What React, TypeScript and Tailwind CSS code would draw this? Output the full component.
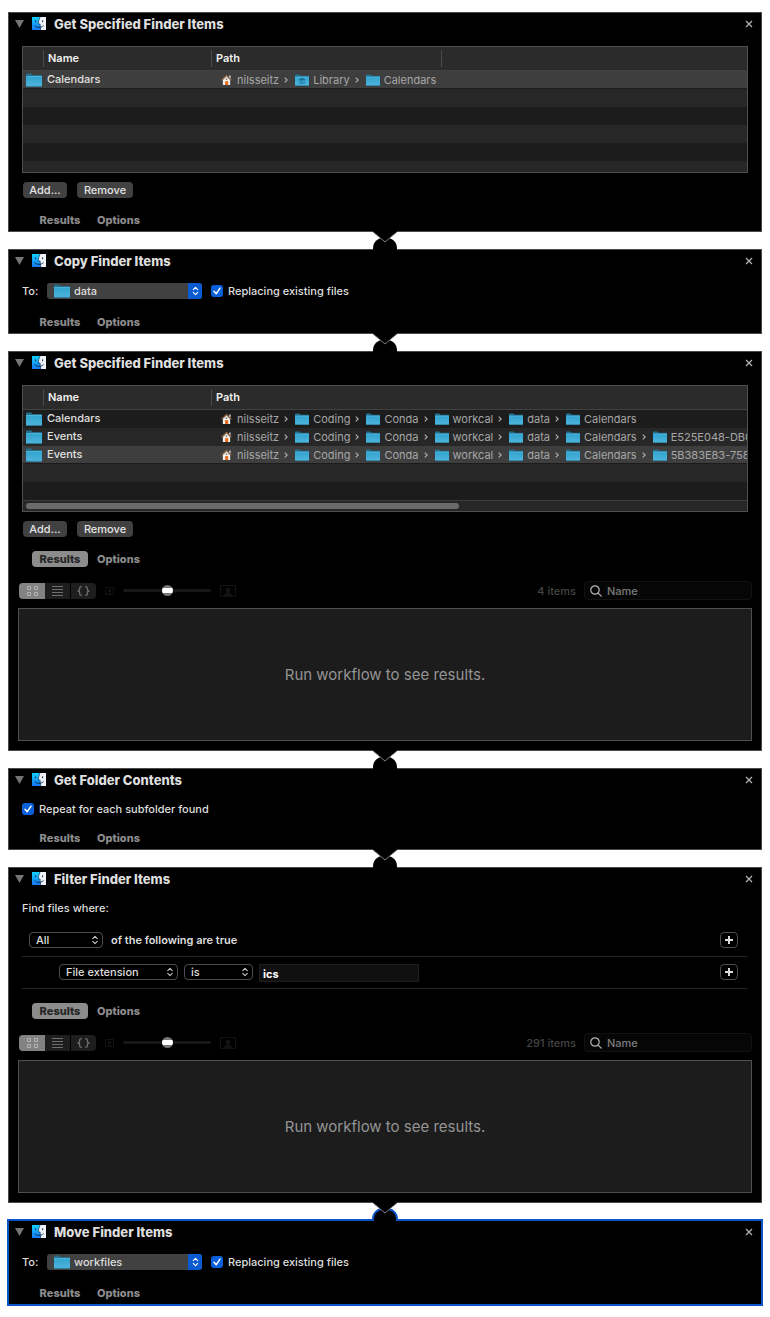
import { Fragment, useState, type ReactNode } from "react";

function FinderIcon() {
  return (
    <svg className="h-[13px] w-3.5 shrink-0" viewBox="0 0 14 13" aria-hidden="true">
      <defs>
        <linearGradient id="finder-left" x1="0" y1="0" x2="0" y2="1">
          <stop offset="0" stopColor="#12d0fb" />
          <stop offset="1" stopColor="#1577f3" />
        </linearGradient>
      </defs>
      <rect width="14" height="13" fill="#eef2f8" />
      <path d="M0 0H8C7 2.2 6.4 4.6 6.3 7H8.1C8.1 9 8.3 11 8.8 13H0Z" fill="url(#finder-left)" />
      <path d="M8 0C7 2.2 6.4 4.6 6.3 7H8.1C8.1 9 8.3 11 8.8 13" fill="none" stroke="#123a63" strokeWidth=".7" />
      <path d="M3.6 3.4V5.2M10.6 3.4V5.2" stroke="#0d2b4a" strokeWidth="1" />
      <path d="M2.6 8.6C5 10.9 9.2 10.9 11.5 8.6" fill="none" stroke="#0d2b4a" strokeWidth="1" />
    </svg>
  );
}

function FolderIcon({ className, library }: { className: string; library?: boolean }) {
  return (
    <svg className={`shrink-0 ${className}`} viewBox="0 0 16 14" preserveAspectRatio="none" aria-hidden="true">
      <defs>
        <linearGradient id="folder-front" x1="0" y1="0" x2="0" y2="1">
          <stop offset="0" stopColor="#2fa3cf" />
          <stop offset="1" stopColor="#4fb4dc" />
        </linearGradient>
      </defs>
      <path d="M0 1.2Q0 .5.7.5H5.2L6.6 1.9H15.3Q16 1.9 16 2.6V13.2H0Z" fill="#256f8c" />
      <path d="M0 3.3H16V13Q16 13.6 15.4 13.6H.6Q0 13.6 0 13Z" fill="url(#folder-front)" />
      <path d="M0 3.6H16" stroke="#5fc4e6" strokeWidth=".7" />
      <path d="M0 13.4H16" stroke="#2b7fa0" strokeWidth=".7" />
      {library && (
        <path d="M8 4.8 11.5 6.7H4.5ZM5.5 7.2V10.5M7.2 7.2V10.5M8.8 7.2V10.5M10.5 7.2V10.5M4.5 11H11.5" fill="#17678a" stroke="#17678a" strokeWidth=".6" />
      )}
    </svg>
  );
}

function HomeIcon() {
  return (
    <svg className="h-3 w-[11px] shrink-0" viewBox="0 0 12 12" aria-hidden="true">
      <path d="M9 1H10.5V4H9Z" fill="#ddd" />
      <path d="M2 6 6 2 10 6V11.5H2Z" fill="#f1efec" />
      <path d="M.6 6.2 6 1 11.4 6.2" fill="none" stroke="#9a6a45" strokeWidth="1.2" />
      <path d="M4.5 7.2H7.8V11.5H4.5Z" fill="#e8681c" />
      <path d="M5.2 4.4H6.8V5.8H5.2Z" fill="#6d5a4c" />
    </svg>
  );
}

function UpDown({ className }: { className: string }) {
  return (
    <svg className={className} viewBox="0 0 8 12" fill="none" stroke="currentColor" strokeWidth="1.3" strokeLinecap="round" strokeLinejoin="round" aria-hidden="true">
      <path d="M1.3 4.3 4 1.7 6.7 4.3M1.3 7.7 4 10.3 6.7 7.7" />
    </svg>
  );
}

function Connector({ active }: { active?: boolean }) {
  return (
    <svg className="relative z-10 mx-auto -my-px block h-[19px] w-[26px]" viewBox="0 0 26 19" aria-hidden="true">
      <path d="M1 19V17.5C1 10.5 6 6.5 13 6.5S25 10.5 25 17.5V19Z" fill="#000" />
      {active && (
        <path d="M1 19V17.5C1 10.5 6 6.5 13 6.5S25 10.5 25 17.5V19" fill="none" stroke="#0a55c8" strokeWidth="2" />
      )}
      <path d="M1 0H25V1L13 11 1 1Z" fill="#000" />
      <path d="M1 1 13 11 25 1" fill="none" stroke="#8c8c8c" strokeWidth=".9" />
    </svg>
  );
}

function Panel({ title, selected, children }: { title: string; selected?: boolean; children: ReactNode }) {
  return (
    <section
      className={
        selected
          ? "border border-[#0a55c8] bg-black ring-1 ring-[#0a55c8]"
          : "border border-[#4a4a4a] bg-black"
      }
    >
      <header className="flex h-[23px] items-center pr-2 pb-0.5 pl-1.5">
        <button type="button" aria-label="Collapse" className="flex h-3 w-[9px] items-center">
          <svg className="h-2 w-[9px]" viewBox="0 0 9 8" aria-hidden="true">
            <path d="M0 0H9L4.5 8Z" fill="#757575" />
          </svg>
        </button>
        <span className="ml-2 flex">
          <FinderIcon />
        </span>
        <h2 className="ml-2 flex-1 text-[13px] leading-4 font-extrabold text-[#dedede]">{title}</h2>
        <button type="button" aria-label="Remove action" className="flex">
          <svg className="h-2 w-2" viewBox="0 0 8 8" fill="none" stroke="#b0b0b0" strokeWidth="1.3" aria-hidden="true">
            <path d="M1 1 7 7M7 1 1 7" />
          </svg>
        </button>
      </header>
      {children}
    </section>
  );
}

function Tabs({ open }: { open?: boolean }) {
  return (
    <div className="flex gap-[2px] pl-[23px] text-[11px] leading-4 font-extrabold">
      <button type="button" className={open ? "h-4 w-14 rounded bg-[#8c8c8c] text-[#262626]" : "h-4 w-14 text-[#8c8c8c]"}>
        Results
      </button>
      <button type="button" className="h-4 px-[7px] text-[#8c8c8c]">
        Options
      </button>
    </div>
  );
}

type Item = { name: string; path: string[]; selected?: boolean };

function PathTrail({ path }: { path: string[] }) {
  return (
    <div className="flex items-center pl-[9px] font-normal whitespace-nowrap text-[#a6a6a6]">
      {path.map((part, i) => (
        <Fragment key={i}>
          {i > 0 && (
            <svg className="mr-[7px] ml-[5px] h-1.5 w-1 shrink-0" viewBox="0 0 4 6" fill="none" stroke="#b0b0b0" strokeWidth="1.1" aria-hidden="true">
              <path d="M.7.6 3.2 3 .7 5.4" />
            </svg>
          )}
          {i === 0 ? <HomeIcon /> : <FolderIcon className="h-3 w-3.5" library={part === "Library"} />}
          <span className={i === 0 ? "ml-[5px]" : "ml-1"}>{part}</span>
        </Fragment>
      ))}
    </div>
  );
}

function FileTable({ items, extraColumn, emptyRows, children }: { items: Item[]; extraColumn?: boolean; emptyRows: string[]; children?: ReactNode }) {
  return (
    <div className="mx-[13px] mt-2.5 h-[127px] overflow-hidden border border-[#4f4f4f] bg-[#1c1c1c]">
      <table className="w-full table-fixed border-separate border-spacing-0 text-left text-[11px] leading-4 font-medium">
        <colgroup>
          <col className="w-[21px]" />
          <col className="w-[168px]" />
          {extraColumn && <col className="w-[230px]" />}
          <col />
        </colgroup>
        <thead>
          <tr className="bg-[#2b2b2b] text-[#f0f0f0]">
            <th className="h-6 border-b border-[#424242] p-0">
              <div className="h-[17px] border-r border-[#4a4a4a]" />
            </th>
            <th className="h-6 border-b border-[#424242] p-0 font-semibold">
              <div className="h-[17px] border-r border-[#4a4a4a] pl-1">Name</div>
            </th>
            <th className="h-6 border-b border-[#424242] p-0 font-semibold">
              <div className={extraColumn ? "h-[17px] border-r border-[#4a4a4a] pl-1" : "h-[17px] pl-1"}>Path</div>
            </th>
            {extraColumn && <th className="h-6 border-b border-[#424242] p-0" />}
          </tr>
        </thead>
        <tbody>
          {items.map((item, i) => {
            const edge = item.selected ? "h-[18px] overflow-hidden border-b border-[#1c1c1c] p-0" : "h-[18px] overflow-hidden p-0";
            return (
              <tr key={i} className={item.selected ? "bg-[#3e3e3e]" : i % 2 ? "bg-[#272727]" : "bg-[#1c1c1c]"}>
                <td className={edge}>
                  <FolderIcon className="ml-[3px] block h-3.5 w-4" />
                </td>
                <td className={edge}>
                  <div className="h-4 pl-[3px] leading-[15px] text-[#e0e0e0]">{item.name}</div>
                </td>
                <td className={edge} colSpan={extraColumn ? 2 : 1}>
                  <PathTrail path={item.path} />
                </td>
              </tr>
            );
          })}
          {emptyRows.map((color, i) => (
            <tr key={`empty-${i}`} className={color}>
              <td className="h-[18px] p-0" colSpan={extraColumn ? 4 : 3} />
            </tr>
          ))}
        </tbody>
      </table>
      {children}
    </div>
  );
}

function TableButtons() {
  return (
    <div className="mt-[9px] mb-3.5 flex gap-2.5 pl-3.5 text-[11px] leading-4 font-medium text-[#e4e4e4]">
      <button type="button" className="h-4 w-11 rounded bg-[#414141]">Add...</button>
      <button type="button" className="h-4 w-14 rounded bg-[#414141]">Remove</button>
    </div>
  );
}

function CheckBox({ label }: { label: string }) {
  const [on, setOn] = useState(true);
  return (
    <label className="flex items-center gap-[5px] text-[11px] leading-4 font-medium text-[#dedede]">
      <span className="relative flex h-3 w-3">
        <input
          type="checkbox"
          checked={on}
          onChange={() => setOn(!on)}
          className="h-3 w-3 appearance-none rounded-[3px] bg-[#3d3d3d] checked:bg-[#0a5fdc]"
        />
        {on && (
          <svg className="pointer-events-none absolute inset-0 h-3 w-3" viewBox="0 0 12 12" fill="none" stroke="#fff" strokeWidth="1.5" strokeLinecap="round" strokeLinejoin="round" aria-hidden="true">
            <path d="M3 6.3 5.2 8.8 9 3.2" />
          </svg>
        )}
      </span>
      {label}
    </label>
  );
}

function Destination({ id, folder }: { id: string; folder: string }) {
  return (
    <div className="mt-2.5 mb-[15px] flex h-4 items-center pl-[13px] text-[11px] leading-4 font-medium text-[#dedede]">
      <label htmlFor={id} className="w-[25px]">To:</label>
      <div className="relative mr-[9px] h-4 w-[155px] overflow-hidden rounded-[3px]">
        <select id={id} className="block h-4 w-full appearance-none bg-[#414141] pl-[27px] leading-4">
          <option>{folder}</option>
        </select>
        <span className="pointer-events-none absolute top-px left-[7px]">
          <FolderIcon className="block h-3.5 w-4" />
        </span>
        <span className="pointer-events-none absolute inset-y-0 right-0 flex w-3.5 items-center justify-center bg-[#0a5ad2] text-white">
          <UpDown className="h-2.5 w-[7px]" />
        </span>
      </div>
      <CheckBox label="Replacing existing files" />
    </div>
  );
}

function OutlineSelect({ label, value, width }: { label: string; value: string; width: string }) {
  return (
    <div className={`relative h-4 ${width}`}>
      <select aria-label={label} className="block h-4 w-full appearance-none rounded border border-[#4d4d4d] bg-black pl-1.5 leading-[14px] text-[#dedede]">
        <option>{value}</option>
      </select>
      <span className="pointer-events-none absolute inset-y-0 right-1 flex items-center text-[#c8c8c8]">
        <UpDown className="h-2.5 w-2" />
      </span>
    </div>
  );
}

function PlusButton() {
  return (
    <button type="button" aria-label="Add rule" className="ml-auto flex h-4 w-[18px] items-center justify-center rounded border border-[#4d4d4d]">
      <svg className="h-2 w-2" viewBox="0 0 8 8" stroke="#dcdcdc" strokeWidth="2" aria-hidden="true">
        <path d="M4 0V8M0 4H8" />
      </svg>
    </button>
  );
}

function ResultsView({ count }: { count: string }) {
  return (
    <>
      <div className="mt-3.5 flex h-[19px] items-center pr-[9px] pl-2.5 text-[11px] leading-4 font-medium">
        <div className="flex h-4 w-[77px] overflow-hidden rounded bg-[#1e1e1e] text-[#6e6e6e]">
          <button type="button" aria-label="Icon view" className="flex w-[26px] items-center justify-center bg-[#828282] text-[#b2b2b2]">
            <svg className="h-2.5 w-[11px]" viewBox="0 0 11 10" fill="none" stroke="currentColor" aria-hidden="true">
              <path d="M.5.5H3.5V3.5H.5ZM7.5.5H10.5V3.5H7.5ZM.5 6.5H3.5V9.5H.5ZM7.5 6.5H10.5V9.5H7.5Z" />
            </svg>
          </button>
          <button type="button" aria-label="List view" className="flex w-[26px] items-center justify-center border-r border-black">
            <svg className="h-2.5 w-[11px]" viewBox="0 0 11 10" stroke="currentColor" aria-hidden="true">
              <path d="M0 .5H11M0 3.5H11M0 6.5H11M0 9.5H11" />
            </svg>
          </button>
          <button type="button" aria-label="Source view" className="flex flex-1 items-center justify-center">
            <svg className="h-2.5 w-[13px]" viewBox="0 0 13 10" fill="none" stroke="currentColor" strokeWidth="1.3" aria-hidden="true">
              <path d="M4.8.6C3.2.6 2.6 1 2.6 2.2V3.5C2.6 4.5 2.2 4.9.6 5 2.2 5.1 2.6 5.5 2.6 6.5V7.8C2.6 9 3.2 9.4 4.8 9.4M8.2.6C9.8.6 10.4 1 10.4 2.2V3.5C10.4 4.5 10.8 4.9 12.4 5 10.8 5.1 10.4 5.5 10.4 6.5V7.8C10.4 9 9.8 9.4 8.2 9.4" />
            </svg>
          </button>
        </div>
        <svg className="ml-[9px] h-2 w-[9px]" viewBox="0 0 9 8" fill="none" stroke="#131313" aria-hidden="true">
          <path d="M.5.5H8.5V7.5H.5Z" />
          <path d="M3 7.5C3 5.5 6 5.5 6 7.5ZM3.5 2.5H5.5V4.5H3.5Z" fill="#131313" />
        </svg>
        <input
          type="range"
          aria-label="Icon size"
          defaultValue={50}
          className="ml-[9px] h-[11px] w-[88px] appearance-none bg-transparent [&::-webkit-slider-runnable-track]:h-[3px] [&::-webkit-slider-runnable-track]:rounded-full [&::-webkit-slider-runnable-track]:bg-[#171717] [&::-webkit-slider-thumb]:-mt-1 [&::-webkit-slider-thumb]:h-[11px] [&::-webkit-slider-thumb]:w-[11px] [&::-webkit-slider-thumb]:appearance-none [&::-webkit-slider-thumb]:rounded-full [&::-webkit-slider-thumb]:bg-[linear-gradient(#777_27%,#fff_27%,#fff_73%,#777_73%)]"
        />
        <svg className="ml-[9px] h-3 w-4" viewBox="0 0 16 12" fill="none" stroke="#131313" aria-hidden="true">
          <path d="M.5.5H15.5V11.5H.5Z" />
          <path d="M4 11C4 8.5 7 9 7 7.5 5.5 6 5.5 3 8 3S10.5 6 9 7.5C9 9 12 8.5 12 11Z" fill="#131313" />
        </svg>
        <span className="mr-2 ml-auto text-[#454545]">{count}</span>
        <label className="flex h-[19px] w-[168px] items-center rounded border border-[#121212] bg-[#060606] pl-[5px]">
          <svg className="h-3 w-3 shrink-0" viewBox="0 0 12 12" fill="none" stroke="#b5b5b5" strokeWidth="1.2" strokeLinecap="round" aria-hidden="true">
            <circle cx="5" cy="5" r="4.2" />
            <path d="M8.2 8.2 11.2 11.2" />
          </svg>
          <input type="search" aria-label="Filter results" placeholder="Name" className="ml-[5px] h-4 w-full min-w-0 bg-transparent text-[#dedede] placeholder:text-[#7c7c7c]" />
        </label>
      </div>
      <div className="mx-[9px] mt-2 mb-[9px] flex h-[133px] items-center justify-center border border-[#4f4f4f] bg-[#1c1c1c] text-[15px] leading-6 text-[#949494]">
        Run workflow to see results.
      </div>
    </>
  );
}

const base = ["nilsseitz", "Coding", "Conda", "workcal", "data", "Calendars"];

const libraryItems: Item[] = [{ name: "Calendars", path: ["nilsseitz", "Library", "Calendars"], selected: true }];

const workItems: Item[] = [
  { name: "Calendars", path: base },
  { name: "Events", path: [...base, "E525E048-DB0"] },
  { name: "Events", path: [...base, "5B383E83-758"], selected: true },
];

export default function App() {
  return (
    <main className="bg-white px-2 py-3 font-[Inter,'Liberation_Sans',sans-serif]">
      <Panel title="Get Specified Finder Items">
        <FileTable
          items={libraryItems}
          extraColumn
          emptyRows={["bg-[#272727]", "bg-[#1c1c1c]", "bg-[#272727]", "bg-[#1c1c1c]", "bg-[#272727]"]}
        />
        <TableButtons />
        <Tabs />
        <div className="h-[3px]" />
      </Panel>
      <Connector />
      <Panel title="Copy Finder Items">
        <Destination id="copy-destination" folder="data" />
        <Tabs />
        <div className="h-[3px]" />
      </Panel>
      <Connector />
      <Panel title="Get Specified Finder Items">
        <FileTable items={workItems} emptyRows={["bg-[#272727]", "bg-[#1c1c1c]"]}>
          <div className="h-[11px] border-t border-[#3c3c3c] bg-[#272727] pt-0.5 pl-[3px]">
            <div className="h-1.5 w-3/5 rounded-full bg-[#6b6b6b]" />
          </div>
        </FileTable>
        <TableButtons />
        <Tabs open />
        <ResultsView count="4 items" />
      </Panel>
      <Connector />
      <Panel title="Get Folder Contents">
        <div className="mt-[9px] mb-[13px] flex pl-[13px]">
          <CheckBox label="Repeat for each subfolder found" />
        </div>
        <Tabs />
        <div className="h-[3px]" />
      </Panel>
      <Connector />
      <Panel title="Filter Finder Items">
        <div className="mx-[13px] mt-[9px] mb-3.5 text-[11px] leading-4 font-medium text-[#dedede]">
          <p>Find files where:</p>
          <div className="mt-4 flex h-[25px] items-start border-b border-[#242424] pr-2.5 pl-[7px] font-semibold">
            <OutlineSelect label="Match" value="All" width="w-[74px] font-medium" />
            <span className="ml-2">of the following are true</span>
            <PlusButton />
          </div>
          <div className="flex h-8 items-start border-b border-[#242424] pt-[7px] pr-2.5 pl-[37px]">
            <OutlineSelect label="Attribute" value="File extension" width="w-[119px]" />
            <div className="w-1.5" />
            <OutlineSelect label="Comparison" value="is" width="w-[69px]" />
            <input aria-label="Value" defaultValue="ics" className="ml-1.5 h-[18px] w-40 border border-[#1e1e1e] bg-[#101010] px-[3px] pt-0.5 font-bold text-white" />
            <PlusButton />
          </div>
        </div>
        <Tabs open />
        <ResultsView count="291 items" />
      </Panel>
      <Connector active />
      <Panel title="Move Finder Items" selected>
        <Destination id="move-destination" folder="workfiles" />
        <Tabs />
        <div className="h-[3px]" />
      </Panel>
    </main>
  );
}
